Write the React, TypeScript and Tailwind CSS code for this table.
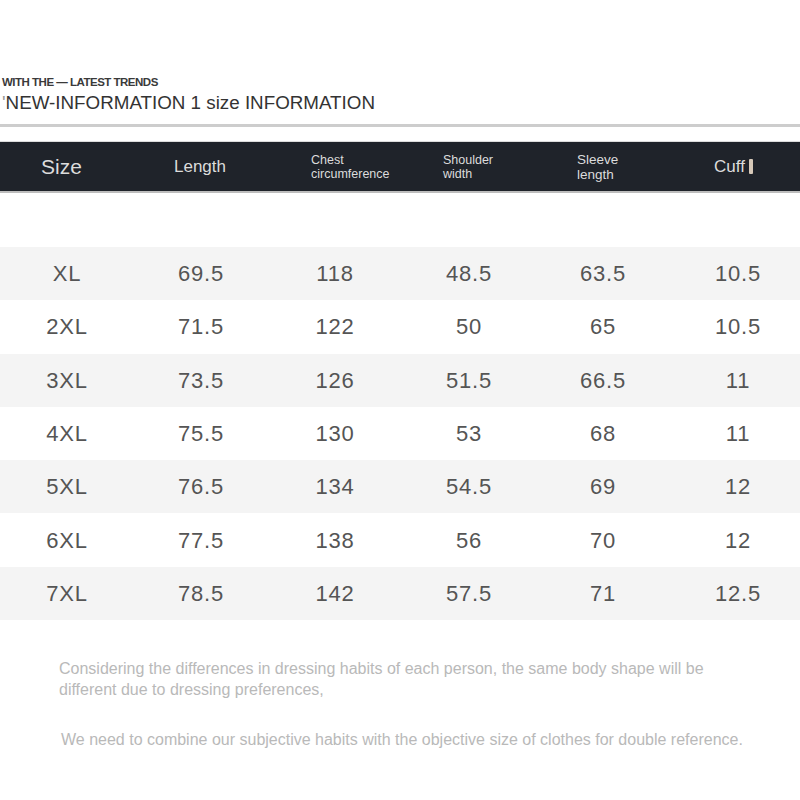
import React from "react";

const rows = [
  ["XL", "69.5", "118", "48.5", "63.5", "10.5"],
  ["2XL", "71.5", "122", "50", "65", "10.5"],
  ["3XL", "73.5", "126", "51.5", "66.5", "11"],
  ["4XL", "75.5", "130", "53", "68", "11"],
  ["5XL", "76.5", "134", "54.5", "69", "12"],
  ["6XL", "77.5", "138", "56", "70", "12"],
  ["7XL", "78.5", "142", "57.5", "71", "12.5"],
];

export default function App() {
  return (
    <div
      className="w-[800px] h-[800px] bg-white overflow-hidden"
      style={{ fontFamily: '"Liberation Sans", Arial, sans-serif' }}
    >
      <div className="pt-[76px] pl-[2px] h-[88px] text-[11.5px] font-bold leading-[12px] text-[#3a3a3a] tracking-[-0.5px] whitespace-nowrap">
        WITH THE — LATEST TRENDS
      </div>
      <div className="h-[30px] pl-[2px] text-[18.8px] leading-[30px] text-[#333] whitespace-nowrap">
        <span className="text-[#999]">'</span>NEW-INFORMATION 1 size INFORMATION
      </div>
      <div className="mt-[6px] h-[3px] bg-[#cdcdcd]" />
      <div className="mt-[14px] border-t border-[#dcdcdc]">
        <div className="h-[51px] bg-[#1f232a] grid grid-cols-[134px_134px_134px_134px_134px_1fr] items-center text-[#dcdcdc] border-b-2 border-[#bdbdbd]">
          <div className="pl-[41px] text-[21px] leading-none">Size</div>
          <div className="pl-[40px] text-[17px] leading-none">Length</div>
          <div className="pl-[43px] text-[12.5px] leading-[14px]">
            Chest
            <br />
            circumference
          </div>
          <div className="pl-[41px] text-[12.5px] leading-[14px]">
            Shoulder
            <br />
            width
          </div>
          <div className="pl-[41px] text-[13.5px] leading-[15px]">
            Sleeve
            <br />
            length
          </div>
          <div className="pl-[44px] flex items-center gap-[4px] text-[17px] leading-none">
            <span>Cuff</span>
            <span className="inline-block w-[4px] h-[15px] bg-[#d6c8b8] rounded-[1px]" />
          </div>
        </div>
      </div>
      <div className="mt-[54px]">
        {rows.map((r, i) => (
          <div
            key={i}
            className={`grid grid-cols-[134px_134px_134px_134px_134px_1fr] items-center h-[53.3px] text-[22px] tracking-[0.8px] text-[#555] ${
              i % 2 === 0 ? "bg-[#f4f4f4]" : "bg-white"
            }`}
          >
            {r.map((c, j) => (
              <div key={j} className={`text-center ${j === 5 ? "pl-[6px]" : ""}`}>
                {c}
              </div>
            ))}
          </div>
        ))}
      </div>
      <div
        className="mt-[38px] pl-[59px] pr-[60px] text-[16px] leading-[21px] text-[#b9b9b9]"
        style={{ fontFamily: '"Liberation Sans Narrow", "Arial Narrow", "Liberation Sans", sans-serif' }}
      >
        <p>
          Considering the differences in dressing habits of each person, the same body shape will be
          <br />
          different due to dressing preferences,
        </p>
        <p className="mt-[29px] pl-[2px] whitespace-nowrap">
          We need to combine our subjective habits with the objective size of clothes for double reference.
        </p>
      </div>
    </div>
  );
}
